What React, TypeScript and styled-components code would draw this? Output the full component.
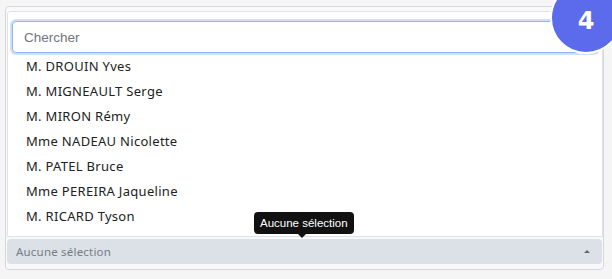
import React from 'react'
import styled, { createGlobalStyle } from 'styled-components'

const GlobalStyle = createGlobalStyle`
  html, body {
    margin: 0;
    padding: 0;
    background: #f5f5f6;
    overflow: hidden;
  }
  * { box-sizing: border-box; }
`

const Page = styled.div`
  position: relative;
  width: 612px;
  height: 279px;
  padding: 6px 8px 0 5px;
`

const Card = styled.div`
  position: relative;
  border: 1px solid #d3d7de;
  border-radius: 4px;
  background: #f9f9fa;
  padding: 4px 0 5px 1px;
`

const Menu = styled.div`
  background: #fff;
  border: 1px solid #dfe2e7;
  border-radius: 3px 3px 0 0;
  padding: 9px 0 7px 0;
  margin-bottom: 2px;
`

const SearchWrap = styled.div`
  padding: 0 4px;
`

const Search = styled.input`
  display: block;
  width: 100%;
  height: 32px;
  padding: 0 11px;
  border: 1px solid #8fb6f2;
  border-radius: 4px;
  box-shadow: 0 0 0 2px rgba(120, 165, 245, 0.35);
  outline: none;
  font-family: 'Liberation Sans', Arial, sans-serif;
  font-size: 13.5px;
  color: #333;
  &::placeholder { color: #6f757c; }
`

const List = styled.ul`
  list-style: none;
  margin: 1px 0 0 0;
  padding: 0;
`

const Item = styled.li`
  height: 25px;
  line-height: 25px;
  padding-left: 18px;
  font-family: 'Noto Sans', 'Open Sans', sans-serif;
  font-size: 13px;
  letter-spacing: 0.3px;
  color: #222;
`

const Toggle = styled.div`
  display: flex;
  align-items: center;
  justify-content: space-between;
  height: 25px;
  margin-right: 1px;
  padding: 0 12px 0 9px;
  background: #dce0e7;
  border-radius: 4px;
  font-family: 'Noto Sans', 'Open Sans', sans-serif;
  font-size: 11.5px;
  letter-spacing: 0.2px;
  color: #777c84;
`

const Caret = styled.span`
  width: 0;
  height: 0;
  border-left: 3px solid transparent;
  border-right: 3px solid transparent;
  border-bottom: 3px solid #666;
`

const Tooltip = styled.div`
  position: absolute;
  left: 254px;
  top: 212px;
  height: 22px;
  padding: 0 6px;
  line-height: 22px;
  background: #111;
  color: #fff;
  border-radius: 4px;
  font-family: 'Liberation Sans', Arial, sans-serif;
  font-size: 11.5px;
  white-space: nowrap;
  &::after {
    content: '';
    position: absolute;
    left: 44px;
    bottom: -4px;
    border-left: 4px solid transparent;
    border-right: 4px solid transparent;
    border-top: 4px solid #111;
  }
`

const Badge = styled.div`
  position: absolute;
  left: 550px;
  top: -18px;
  width: 72px;
  height: 72px;
  border-radius: 50%;
  background: #5b6bec;
  border: 2px solid #fff;
  display: flex;
  align-items: flex-end;
  justify-content: center;
  padding: 0 0 19px 0;
  color: #fff;
  font-family: 'DejaVu Sans', sans-serif;
  font-weight: bold;
  font-size: 24px;
  line-height: 1;
`

const people = [
  'M. DROUIN Yves',
  'M. MIGNEAULT Serge',
  'M. MIRON Rémy',
  'Mme NADEAU Nicolette',
  'M. PATEL Bruce',
  'Mme PEREIRA Jaqueline',
  'M. RICARD Tyson',
]

export default function App() {
  return (
    <Page>
      <GlobalStyle />
      <Card>
        <Menu>
          <SearchWrap>
            <Search placeholder="Chercher" />
          </SearchWrap>
          <List>
            {people.map((p) => (
              <Item key={p}>{p}</Item>
            ))}
          </List>
        </Menu>
        <Toggle>
          <span>Aucune sélection</span>
          <Caret />
        </Toggle>
      </Card>
      <Tooltip>Aucune sélection</Tooltip>
      <Badge>4</Badge>
    </Page>
  )
}
